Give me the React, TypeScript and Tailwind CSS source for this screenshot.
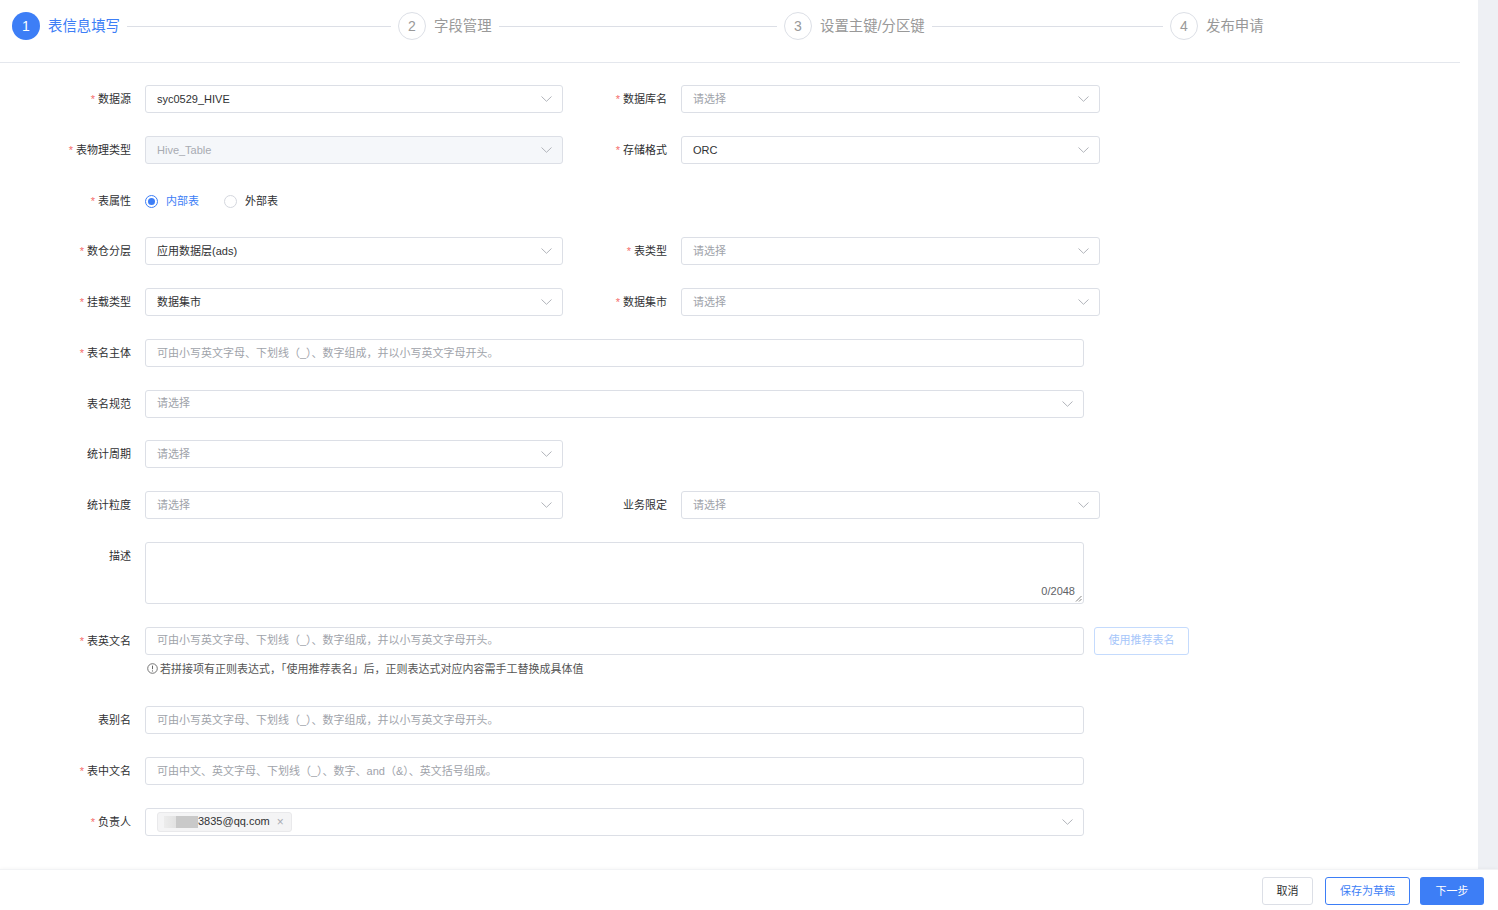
import type { ReactNode } from "react";

const steps = ["表信息填写", "字段管理", "设置主键/分区键", "发布申请"];

function Chevron() {
  return (
    <svg width="11" height="6" viewBox="0 0 11 6" fill="none" className="shrink-0">
      <path d="M0.5 0.5L5.5 5.3L10.5 0.5" stroke="#b1b4ba" strokeWidth="1" />
    </svg>
  );
}

function Label({ text, required, className }: { text: string; required?: boolean; className: string }) {
  return (
    <div className={`${className} shrink-0 pr-[14px] text-right text-[11px] leading-[28px] text-[#303133]`}>
      {required && <span className="mr-[3px] text-[#f56c6c]">*</span>}
      {text}
    </div>
  );
}

function Select({
  value,
  placeholder = "请选择",
  disabled,
  className,
}: {
  value?: string;
  placeholder?: string;
  disabled?: boolean;
  className: string;
}) {
  return (
    <div
      className={`${className} flex h-[28px] items-center justify-between rounded-[3px] border border-[#dcdfe6] pl-[11px] pr-[10px] text-[11px] ${
        disabled ? "bg-[#f5f7fa]" : "bg-white"
      }`}
    >
      <span className={disabled ? "text-[#a8abb2]" : value ? "text-[#303133]" : "text-[#a0a3aa]"}>
        {value ?? placeholder}
      </span>
      <Chevron />
    </div>
  );
}

function Input({ placeholder, className }: { placeholder: string; className: string }) {
  return (
    <div
      className={`${className} flex h-[28px] items-center rounded-[3px] border border-[#dcdfe6] bg-white pl-[11px] text-[11px] text-[#a0a3aa]`}
    >
      {placeholder}
    </div>
  );
}

function Row({ children, mb = "mb-[22.75px]" }: { children: ReactNode; mb?: string }) {
  return <div className={`flex items-start ${mb}`}>{children}</div>;
}

function Radio({ label, checked }: { label: string; checked?: boolean }) {
  return (
    <label className="flex items-center">
      <span
        className={`flex h-[13px] w-[13px] items-center justify-center rounded-full border ${
          checked ? "border-[#3d7ef6]" : "border-[#d4d7de]"
        } bg-white`}
      >
        {checked && <span className="h-[7px] w-[7px] rounded-full bg-[#3d7ef6]" />}
      </span>
      <span className={`ml-[8px] text-[11px] ${checked ? "text-[#3d7ef6]" : "text-[#303133]"}`}>{label}</span>
    </label>
  );
}

const namePh = "可由小写英文字母、下划线（_）、数字组成，并以小写英文字母开头。";

export default function App() {
  return (
    <div className="flex h-[910px] w-[1498px] flex-col overflow-hidden bg-white font-['Liberation_Sans','Noto_Sans_CJK_SC',sans-serif]">
      <div className="flex h-[869px]">
        <div className="flex-1 overflow-hidden bg-white">
          {/* steps */}
          <div className="box-border flex h-[63px] w-[1460px] items-start border-b border-[#e4e7ed] pl-[12px] pt-[12px]">
            {steps.map((s, i) => (
              <div key={s} className={`flex items-center ${i < 3 ? "w-[386px]" : ""}`}>
                {i === 0 ? (
                  <span className="flex h-[28px] w-[28px] shrink-0 items-center justify-center rounded-full bg-[#3d7ef6] text-[14px] text-white">
                    1
                  </span>
                ) : (
                  <span className="box-border flex h-[28px] w-[28px] shrink-0 items-center justify-center rounded-full border border-[#dcdfe6] text-[14px] text-[#999]">
                    {i + 1}
                  </span>
                )}
                <span className={`ml-[8px] whitespace-nowrap text-[14.4px] leading-[28px] ${i === 0 ? "text-[#3d7ef6]" : "text-[#999]"}`}>
                  {s}
                </span>
                {i < 3 && <div className="mx-[7px] h-px flex-1 bg-[#dcdfe6]" />}
              </div>
            ))}
          </div>

          {/* form */}
          <div className="mt-[22px]">
            <Row>
              <Label className="w-[145px]" required text="数据源" />
              <Select className="w-[418px]" value="syc0529_HIVE" />
              <Label className="w-[118px]" required text="数据库名" />
              <Select className="w-[419px]" />
            </Row>
            <Row>
              <Label className="w-[145px]" required text="表物理类型" />
              <Select className="w-[418px]" value="Hive_Table" disabled />
              <Label className="w-[118px]" required text="存储格式" />
              <Select className="w-[419px]" value="ORC" />
            </Row>
            <Row>
              <Label className="w-[145px]" required text="表属性" />
              <div className="flex h-[28px] items-center gap-[25px] pt-[2px]">
                <Radio label="内部表" checked />
                <Radio label="外部表" />
              </div>
            </Row>
            <Row>
              <Label className="w-[145px]" required text="数仓分层" />
              <Select className="w-[418px]" value="应用数据层(ads)" />
              <Label className="w-[118px]" required text="表类型" />
              <Select className="w-[419px]" />
            </Row>
            <Row>
              <Label className="w-[145px]" required text="挂载类型" />
              <Select className="w-[418px]" value="数据集市" />
              <Label className="w-[118px]" required text="数据集市" />
              <Select className="w-[419px]" />
            </Row>
            <Row>
              <Label className="w-[145px]" required text="表名主体" />
              <Input className="w-[939px]" placeholder={namePh} />
            </Row>
            <Row>
              <Label className="w-[145px]" text="表名规范" />
              <Select className="w-[939px]" />
            </Row>
            <Row>
              <Label className="w-[145px]" text="统计周期" />
              <Select className="w-[418px]" />
            </Row>
            <Row>
              <Label className="w-[145px]" text="统计粒度" />
              <Select className="w-[418px]" />
              <Label className="w-[118px]" text="业务限定" />
              <Select className="w-[419px]" />
            </Row>
            <Row>
              <Label className="w-[145px]" text="描述" />
              <div className="relative h-[62px] w-[939px] rounded-[3px] border border-[#dcdfe6] bg-white">
                <span className="absolute bottom-[3px] right-[8px] text-[11px] text-[#606266]">0/2048</span>
                <svg className="absolute bottom-[1px] right-[1px]" width="7" height="7" viewBox="0 0 7 7">
                  <path d="M6.5 1L1 6.5M6.5 4L4 6.5" stroke="#777" strokeWidth="0.9" />
                </svg>
              </div>
            </Row>
            <Row mb="mb-0">
              <Label className="w-[145px]" required text="表英文名" />
              <Input className="w-[939px]" placeholder={namePh} />
              <button className="ml-[10px] h-[28px] w-[95px] rounded-[3px] border border-[#c5dbfd] bg-white text-[11px] text-[#a6c6fa]">
                使用推荐表名
              </button>
            </Row>
            <div className="mb-[22.75px] flex h-[28.75px] items-start pl-[147px] pt-[4px]">
              <div className="flex items-center text-[11px] leading-[20px] text-[#555]">
                <svg width="11" height="11" viewBox="0 0 11 11" className="mr-[2px]">
                  <circle cx="5.5" cy="5.5" r="4.8" fill="none" stroke="#666" strokeWidth="0.9" />
                  <path d="M5.5 2.6V6.2" stroke="#666" strokeWidth="1" />
                  <circle cx="5.5" cy="7.9" r="0.6" fill="#666" />
                </svg>
                若拼接项有正则表达式，「使用推荐表名」后，正则表达式对应内容需手工替换成具体值
              </div>
            </div>
            <Row>
              <Label className="w-[145px]" text="表别名" />
              <Input className="w-[939px]" placeholder={namePh} />
            </Row>
            <Row>
              <Label className="w-[145px]" required text="表中文名" />
              <Input className="w-[939px]" placeholder="可由中文、英文字母、下划线（_）、数字、and（&）、英文括号组成。" />
            </Row>
            <Row>
              <Label className="w-[145px]" required text="负责人" />
              <div className="flex h-[28px] w-[939px] items-center justify-between rounded-[3px] border border-[#dcdfe6] bg-white pl-[11px] pr-[10px]">
                <span className="flex h-[20px] items-center rounded-[3px] border border-[#e9e9eb] bg-[#f4f4f5] pl-[6px] pr-[7px] text-[11px] text-[#303133]">
                  <span className="h-[12px] w-[34px] bg-[linear-gradient(90deg,#ececec_0%,#e2e2e2_35%,#c9c9c9_36%,#c9c9c9_100%)]" />
                  3835@qq.com
                  <span className="ml-[7px] text-[12px] leading-none text-[#a8abb2]">×</span>
                </span>
                <Chevron />
              </div>
            </Row>
          </div>
        </div>
        <div className="w-[20px] bg-[#eef0f4]" />
      </div>

      {/* footer */}
      <div className="flex h-[41px] items-start justify-end border-t border-[#f2f3f5] bg-white pr-[14px] pt-[7px] shadow-[0_-1px_3px_rgba(0,0,0,0.03)]">
        <button className="h-[28px] w-[51px] rounded-[3px] border border-[#dcdfe6] bg-white text-[11px] text-[#303133]">
          取消
        </button>
        <button className="ml-[12px] h-[28px] w-[85px] rounded-[3px] border border-[#3d7ef6] bg-white text-[11px] text-[#3d7ef6]">
          保存为草稿
        </button>
        <button className="ml-[10px] h-[28px] w-[64px] rounded-[3px] bg-[#3d7ef6] text-[11px] text-white">
          下一步
        </button>
      </div>
    </div>
  );
}
